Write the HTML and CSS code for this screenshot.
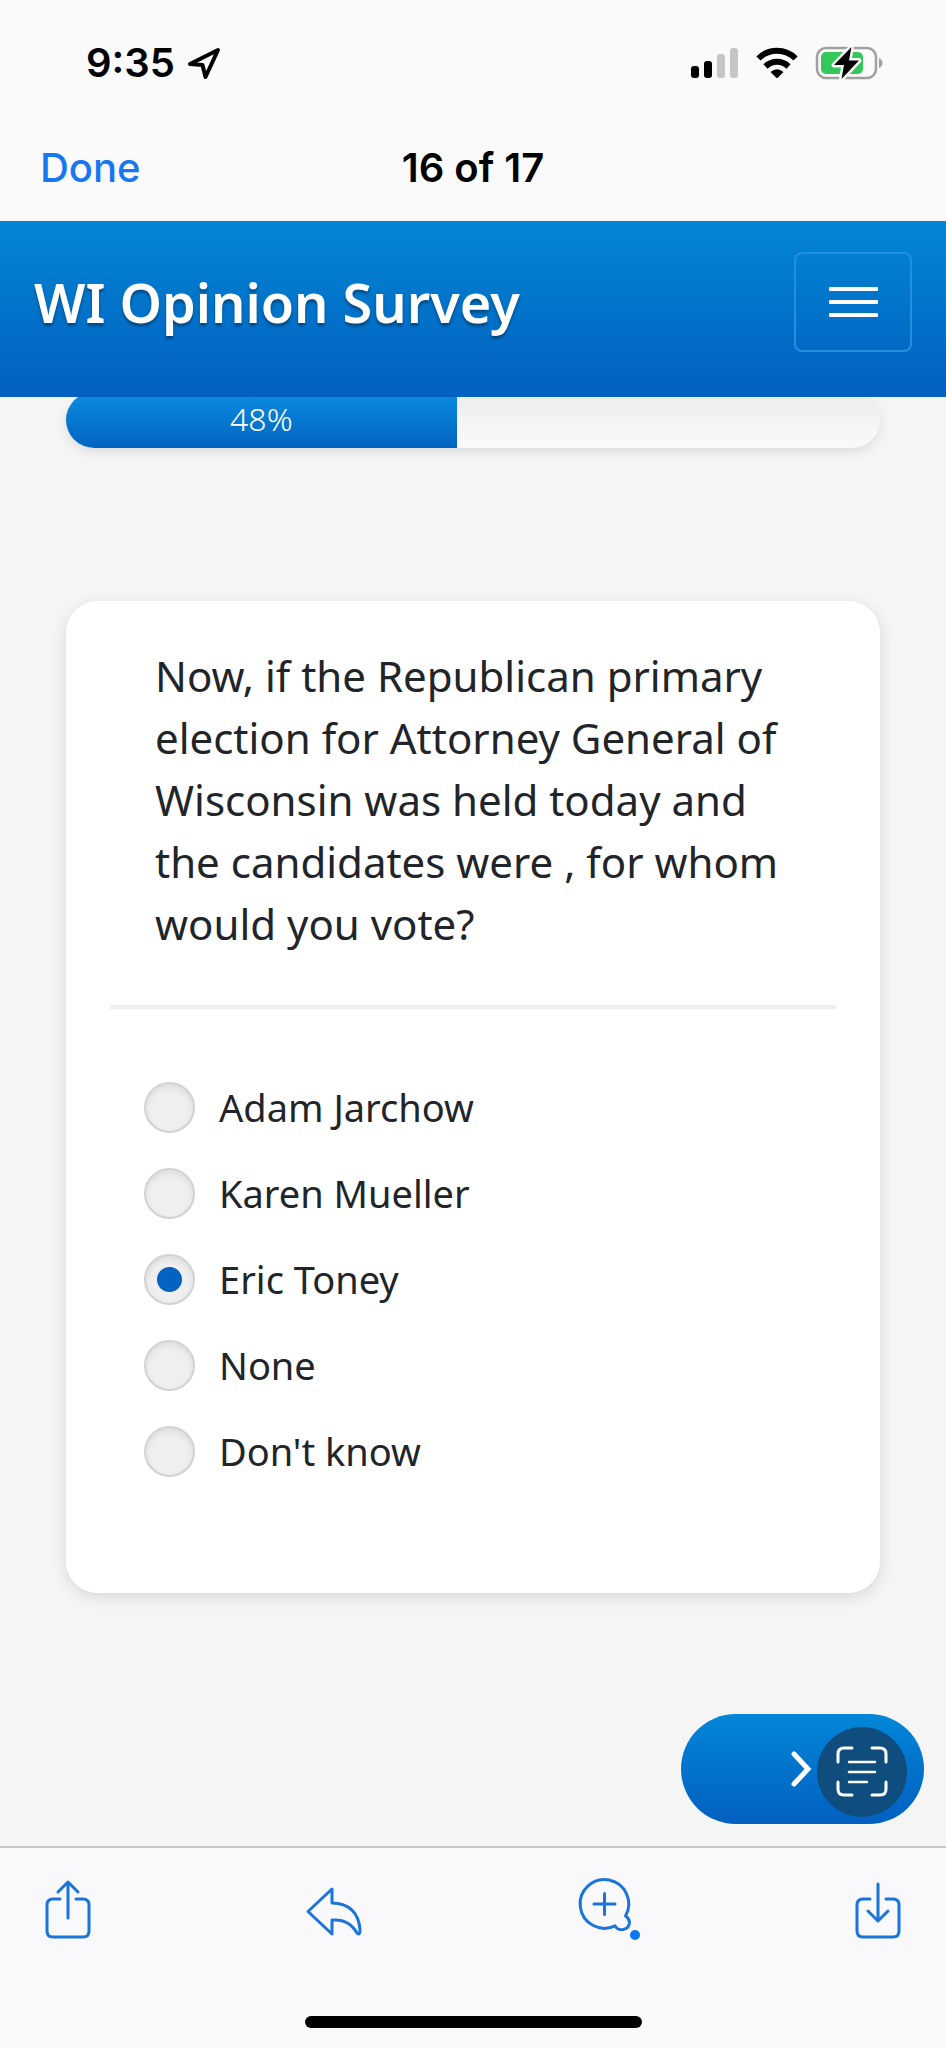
FILE: index.html
```html
<!DOCTYPE html>
<html lang="en">
<head>
<meta charset="utf-8">
<meta name="viewport" content="width=device-width, initial-scale=1">
<title>WI Opinion Survey</title>
<link rel="stylesheet" href="styles.css">
</head>
<body>
<div class="screen">
  <div class="status">
    <div class="status-left">
      <span class="clock">9:35</span>
      <svg width="34" height="32" viewBox="0 0 34 32" fill="none" stroke="#000" stroke-width="4" stroke-linejoin="round" aria-hidden="true"><path d="M31 3 L3 17 L15.500 18 L18.500 30 Z"/></svg>
    </div>
    <div class="status-right">
      <svg width="48" height="32" viewBox="0 0 48 32" aria-hidden="true"><rect x="0" y="19" width="8" height="12" rx="3"/><rect x="13" y="14" width="8" height="17" rx="3"/><g fill="#c6c6c6"><rect x="26" y="7" width="8" height="24" rx="3"/><rect x="39" y="1" width="8" height="30" rx="3"/></g></svg>
      <svg width="42" height="32" viewBox="0 0 42 32" aria-hidden="true"><g fill="none" stroke="#000" stroke-width="6"><path d="M2.500 11.500 A26 26 0 0 1 39.500 11.500"/><path d="M9.500 19.500 A16.500 16.500 0 0 1 32.500 19.500"/></g><path d="M14.500 25 Q21 19.500 27.500 25 L22 30.500 Q21 31.500 20 30.500 Z"/></svg>
      <svg width="68" height="36" viewBox="0 0 68 36" aria-hidden="true"><rect x="2" y="3" width="59" height="30" rx="9" fill="none" stroke="#a0a0a0" stroke-width="2.500"/><path d="M64 13 Q67.500 15 67.500 18 T64 23 Z" fill="#a0a0a0"/><rect x="6" y="7" width="42" height="22" rx="5" fill="#34c759"/><path d="M36.500 2 L19 20 H29 L26.500 34 L44 15.500 H34 Z" fill="#000" stroke="#fafafa" stroke-width="5" stroke-linejoin="round" paint-order="stroke"/></svg>
    </div>
  </div>
  <nav class="viewer-bar">
    <button class="done" type="button">Done</button>
    <span class="count">16 of 17</span>
  </nav>

  <header class="site-header">
    <h1 class="title">WI Opinion Survey</h1>
    <button class="menu" type="button" aria-label="Menu"><span class="menu-line"></span><span class="menu-line"></span><span class="menu-line"></span></button>
  </header>

  <main class="page">
    <div class="progress" role="progressbar" aria-label="Survey progress" aria-valuenow="48" aria-valuemin="0" aria-valuemax="100"><div class="progress-fill" style="width:48%">48%</div></div>
    <form class="survey">
      <fieldset class="card">
        <legend class="question">Now, if the Republican primary election for Attorney General of Wisconsin was held today and the candidates were , for whom would you vote?</legend>
        <div class="options">
          <label class="option"><input class="radio" type="radio" name="vote"><span>Adam Jarchow</span></label>
          <label class="option"><input class="radio" type="radio" name="vote"><span>Karen Mueller</span></label>
          <label class="option"><input class="radio" type="radio" name="vote" checked><span>Eric Toney</span></label>
          <label class="option"><input class="radio" type="radio" name="vote"><span>None</span></label>
          <label class="option"><input class="radio" type="radio" name="vote"><span>Don't know</span></label>
        </div>
      </fieldset>
      <div class="next-wrap">
        <button class="next" type="button" aria-label="Next"><svg width="22" height="36" viewBox="0 0 22 36" fill="none" stroke="#fff" stroke-width="5" stroke-linecap="round" stroke-linejoin="miter" aria-hidden="true"><path d="M3 3 L17 18 L3 33"/></svg></button>
        <button class="scan" type="button" aria-label="Scan text"><svg width="52" height="52" viewBox="0 0 52 52" fill="none" stroke="#fff" stroke-width="3" stroke-linecap="round" aria-hidden="true"><path d="M2 16 V8 Q2 2 8 2 H16 M36 2 H44 Q50 2 50 8 V16 M50 36 V43 Q50 49 44 49 H36 M16 49 H8 Q2 49 2 43 V36"/><path d="M13 16 H39 M13 26 H39 M13 36 H31" stroke-width="2.500"/></svg></button>
      </div>
    </form>
  </main>

  <footer class="toolbar">
    <div class="tools">
      <button class="tool" type="button" aria-label="Share"><svg width="46" height="64" viewBox="0 0 46 64"><path d="M15 21 H8 Q2 21 2 27 V53 Q2 59 8 59 H38 Q44 59 44 53 V27 Q44 21 38 21 H31 M23 40 V4 M13 14 L23 4 L33 14"/></svg></button>
      <button class="tool" type="button" aria-label="Reply"><svg width="56" height="64" viewBox="0 0 56 64"><path d="M26 11 L2 33.500 L26 56 V42 C39 41 46 46 51 55 Q54 58 54 52 C53 35 43 25 26 25 Z"/></svg></button>
      <button class="tool" type="button" aria-label="Add effect"><svg width="62" height="64" viewBox="0 0 62 64"><path d="M47.500 38 A24.300 24.300 0 1 0 37 47.800 C40 54 51.500 52.500 51.500 44 Q51 40 47.500 38 Z M26.500 15.500 V36.500 M16 26 H37"/><circle cx="57" cy="57" r="5" fill="#0a78f0" stroke="none"/></svg></button>
      <button class="tool" type="button" aria-label="Save"><svg width="46" height="64" viewBox="0 0 46 64"><path d="M15 21 H8 Q2 21 2 27 V53 Q2 59 8 59 H38 Q44 59 44 53 V27 Q44 21 38 21 H31 M23 6 V43 M13 33 L23 43 L33 33"/></svg></button>
    </div>
    <div class="home-bar"></div>
  </footer>
</div>
</body>
</html>
```

FILE: styles.css
```css
* { box-sizing: border-box; }
body { margin: 0; color: #212529; background: #f5f5f5; font-family: "Noto Sans", sans-serif; }
button { margin: 0; padding: 0; border: 0; background: none; font: inherit; color: inherit; }
svg { display: block; overflow: visible; }

.screen { display: flex; flex-direction: column; min-height: 100vh; }

.status { display: flex; justify-content: space-between; align-items: center; height: 126px; padding: 0 63px 0 86px; background: #fafafa; color: #000; font-family: Inter, sans-serif; }
.status-left, .status-right { display: flex; align-items: center; }
.status-left { gap: 12px; }
.status-right { gap: 17px; }
.clock { font-size: 40px; font-weight: 600; line-height: 48px; }

.viewer-bar { display: grid; grid-template-columns: 1fr auto 1fr; align-items: center; height: 95px; padding: 0 40px 11px; background: #fafafa; color: #000; font-family: Inter, sans-serif; font-size: 40px; line-height: 48px; }
.done { justify-self: start; color: #1677f0; font-weight: 500; }
.count { grid-column: 2; font-weight: 600; }

.site-header { position: relative; z-index: 1; display: flex; align-items: center; justify-content: space-between; height: 176px; padding: 0 34px 14px; background: linear-gradient(#0286d4, #0260c0); color: #fff; }
.title { margin: 0; font-size: 54px; font-weight: 600; line-height: 72px; text-shadow: 0 3px 3px rgba(0, 0, 0, .35); }
.menu { display: flex; flex-direction: column; align-items: center; justify-content: center; gap: 9px; width: 118px; height: 100px; border: 2px solid #2290dc; border-radius: 8px; }
.menu-line { width: 49px; height: 4px; border-radius: 1px; background: #fff; }

.page { flex: 1; display: flex; flex-direction: column; padding: 0 66px; }
.progress { height: 56px; margin-top: -5px; overflow: hidden; border-radius: 28px; background: linear-gradient(#ececec, #fafafa); box-shadow: 0 4px 12px rgba(0, 0, 0, .1); }
.progress-fill { height: 100%; background: linear-gradient(#0a8ce0, #0264c0); color: #fff; font-size: 32px; font-weight: 300; line-height: 54px; text-align: center; }

.survey { flex: 1; display: flex; flex-direction: column; margin-top: 153px; }
.card { min-width: 0; margin: 0; padding: 44px 44px 116px; border: 0; border-radius: 32px; background: #fff; box-shadow: 0 4px 16px rgba(0, 0, 0, .12); }
.question { float: left; width: 100%; padding: 0 40px 50px 45px; border-bottom: 4px solid #eee; font-size: 42px; line-height: 62px; }
.options { clear: both; display: flex; flex-direction: column; gap: 34px; padding: 72px 0 0 34px; }
.option { display: flex; align-items: center; gap: 24px; font-size: 38px; line-height: 52px; }
.radio { appearance: none; flex: none; width: 51px; height: 51px; margin: 0; border: 2px solid #d2d2d2; border-radius: 50%; background: #efefef; box-shadow: inset 0 3px 6px rgba(0, 0, 0, .08); }
.radio:checked { background: radial-gradient(circle, #0264c0 12px, #efefef 13px); }

.next-wrap { position: relative; align-self: flex-end; width: 243px; height: 110px; margin: 121px -44px 22px 0; }
.next { display: flex; align-items: center; width: 100%; height: 100%; padding-left: 110px; border-radius: 55px; background: linear-gradient(#0286d8, #0260c0); }
.scan { position: absolute; top: 13px; right: 17px; display: flex; align-items: center; justify-content: center; width: 90px; height: 90px; border-radius: 50%; background: #0f4d7e; }

.toolbar { display: flex; flex-direction: column; justify-content: space-between; height: 202px; padding: 30px 45px 20px; border-top: 2px solid #c8c8ca; background: #f9f9fb; }
.tools { display: flex; justify-content: space-between; }
.tool svg { fill: none; stroke: #1b74da; stroke-width: 3; stroke-linecap: round; stroke-linejoin: round; }
.home-bar { align-self: center; width: 337px; height: 12px; border-radius: 6px; background: #000; }
```
